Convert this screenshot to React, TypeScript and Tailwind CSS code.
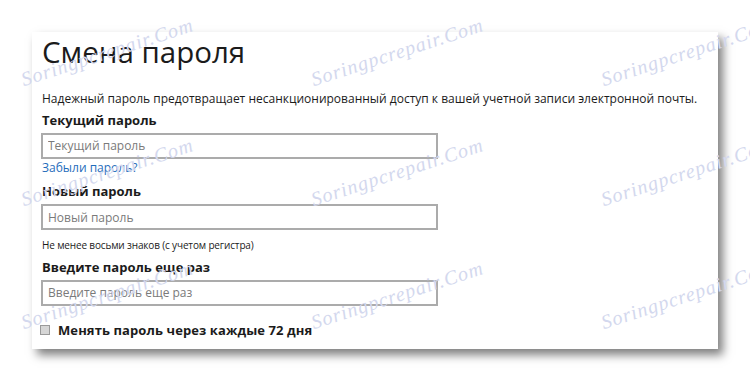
import React from "react";

const font = "font-['Open_Sans','Noto_Sans',sans-serif]";

function Watermark({ className }: { className: string }) {
  return (
    <span
      className={`absolute origin-bottom-left -rotate-[18deg] whitespace-nowrap font-['Liberation_Serif',serif] text-[20px] italic leading-[22px] tracking-[1px] text-[#d3d8ee] ${className}`}
    >
      Soringpcrepair.Com
    </span>
  );
}

function PasswordInput({ placeholder }: { placeholder: string }) {
  return (
    <input
      type="password"
      placeholder={placeholder}
      className="ml-[-1px] h-[26px] w-[397px] border-2 border-[#ababab] bg-white px-[5px] text-[12px] text-[#222] outline-none placeholder:text-[#7a7a7a]"
    />
  );
}

export default function App() {
  return (
    <div className={`relative h-[387px] w-[750px] overflow-hidden bg-white pl-[32px] pt-[32px] ${font}`}>
      <div className="flex h-[317px] w-[686px] flex-col bg-white pl-[10px] pt-[2px] text-[#1b1b1b] shadow-[5px_6px_9px_rgba(0,0,0,0.5)]">
        <h1 className="h-[36px] text-[29.5px] font-normal leading-[36px]">Смена пароля</h1>
        <p className="mt-[21px] h-[16px] whitespace-nowrap text-[12px] leading-[16px]">
          Надежный пароль предотвращает несанкционированный доступ к вашей учетной записи электронной почты.
        </p>
        <label className="mt-[4px] h-[18px] text-[13px] font-bold leading-[18px]">Текущий пароль</label>
        <div className="mt-[3px]">
          <PasswordInput placeholder="Текущий пароль" />
        </div>
        <a className="mt-[1px] h-[16px] self-start text-[12px] leading-[16px] text-[#1f6dbb]" href="#">
          Забыли пароль?
        </a>
        <label className="mt-[6px] h-[18px] text-[13px] font-bold leading-[18px]">Новый пароль</label>
        <div className="mt-[4px]">
          <PasswordInput placeholder="Новый пароль" />
        </div>
        <p className="mt-[8px] h-[14px] whitespace-nowrap text-[10px] leading-[14px] tracking-[-0.15px]">
          Не менее восьми знаков (с учетом регистра)
        </p>
        <label className="mt-[6px] h-[18px] text-[13px] font-bold leading-[18px]">Введите пароль еще раз</label>
        <div className="mt-[3px]">
          <PasswordInput placeholder="Введите пароль еще раз" />
        </div>
        <label className="mt-[15px] flex h-[18px] items-center gap-[8px] text-[13px] font-bold leading-[18px] tracking-[0.1px]">
          <span className="ml-[-2px] h-[10px] w-[10px] border border-[#9a9a9a] bg-[#d6d6d6]" />
          Менять пароль через каждые 72 дня
        </label>
      </div>

      <Watermark className="left-[25px] top-[68px]" />
      <Watermark className="left-[315px] top-[68px]" />
      <Watermark className="left-[605px] top-[68px]" />
      <Watermark className="left-[25px] top-[188px]" />
      <Watermark className="left-[315px] top-[188px]" />
      <Watermark className="left-[605px] top-[188px]" />
      <Watermark className="left-[25px] top-[311px]" />
      <Watermark className="left-[315px] top-[311px]" />
      <Watermark className="left-[605px] top-[311px]" />
    </div>
  );
}
